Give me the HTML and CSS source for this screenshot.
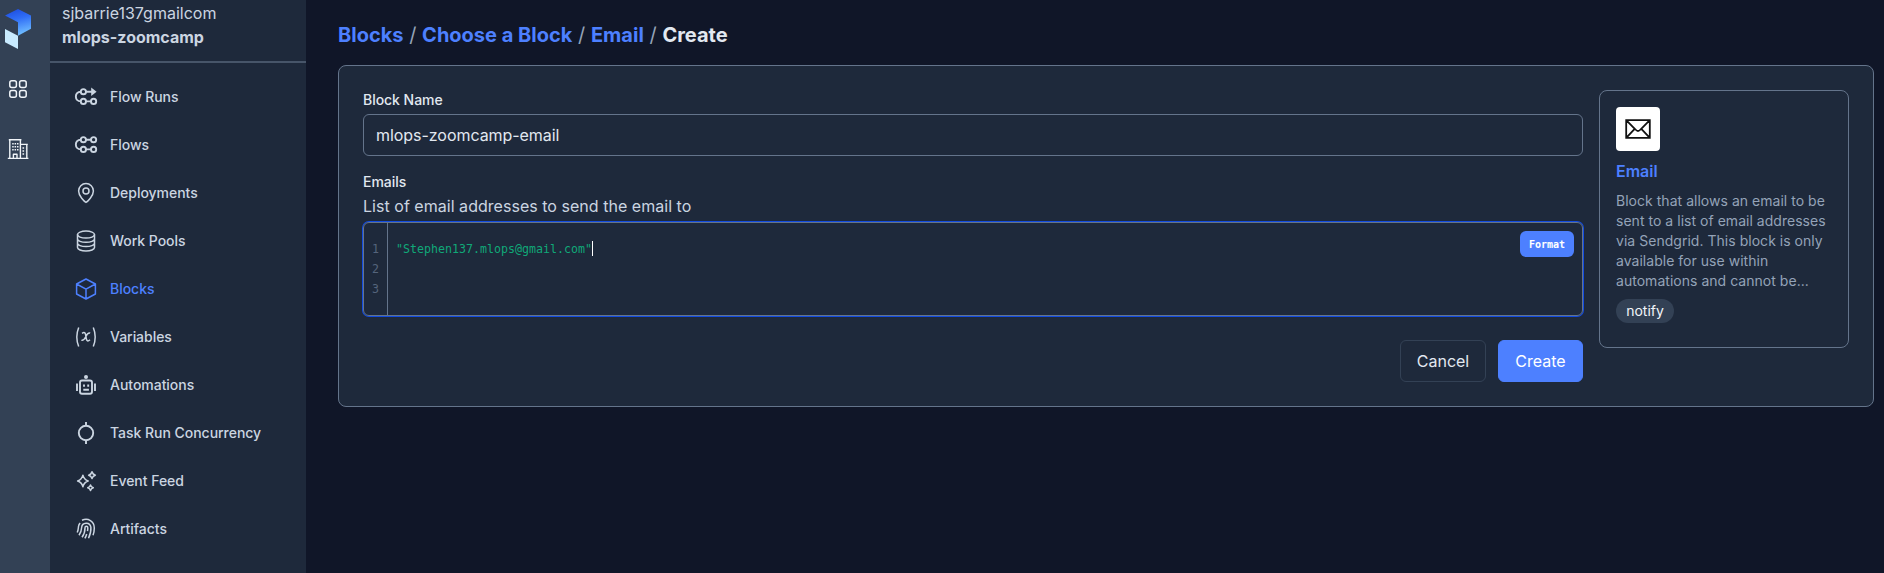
FILE: index.html
```html
<!DOCTYPE html>
<html lang="en">
<head>
<meta charset="utf-8">
<title>Create Block</title>
<link rel="stylesheet" href="styles.css">
</head>
<body>
<div class="app">
  <nav class="rail">
    <svg class="logo" width="26" height="40" viewBox="0 0 26 40">
      <defs><linearGradient id="lg" x1="0" y1="0" x2="0.25" y2="1"><stop offset="0" stop-color="#1b48dc"/><stop offset=".45" stop-color="#2f6df6"/><stop offset="1" stop-color="#6bb8ff"/></linearGradient></defs>
      <path d="M0 6.5 13 0l13 6.5v13.3L13 26.8V13.2z" fill="url(#lg)"/>
      <path d="M0 20l13 6.8V40L0 33.2z" fill="#c9ebff"/>
    </svg>
    <svg class="rail-icon" width="24" height="24" viewBox="0 0 24 24"><g class="ln"><rect x="3.8" y="3.8" width="6.6" height="6.6" rx="2"/><rect x="13.6" y="3.8" width="6.6" height="6.6" rx="2"/><rect x="3.8" y="13.6" width="6.6" height="6.6" rx="2"/><rect x="13.6" y="13.6" width="6.6" height="6.6" rx="2"/></g></svg>
    <svg class="rail-icon" width="24" height="24" viewBox="0 0 24 24"><g class="ln ln-thin"><path d="M1.8 21.4h20.6M2.8 2.7h12.6M3.8 2.7v18.7M14.4 2.7v18.7M14.4 7.4h7.4M20.8 7.4v14M7.4 21.4v-4.2h3.6v4.2"/></g><path class="dots" d="M6.2 6.7h6.4M6.2 9.7h6.4M6.2 12.7h6.4M16.5 11h2.6M16.5 14h2.6M16.5 17h2.6"/></svg>
  </nav>
  <aside class="sidebar">
    <header class="account"><span>sjbarrie137gmailcom</span><strong>mlops-zoomcamp</strong></header>
    <ul class="menu">
      <li><svg width="24" height="24" viewBox="0 0 24 24"><g class="ln ln-bold"><circle cx="9.4" cy="6.7" r="2.6"/><circle cx="9.4" cy="16.4" r="2.6"/><circle cx="19.6" cy="16.4" r="2.6"/><path d="M12 6.7h6M12 16.4h5M6.8 6.7C.2 6.7.2 16.4 6.8 16.4"/></g><path class="solid" d="M17.2 2.5l5.4 4.2-5.4 4.2z"/></svg>Flow Runs</li>
      <li><svg width="24" height="24" viewBox="0 0 24 24"><g class="ln ln-bold"><circle cx="9.4" cy="6.7" r="2.6"/><circle cx="19.6" cy="6.7" r="2.6"/><circle cx="9.4" cy="16.4" r="2.6"/><circle cx="19.6" cy="16.4" r="2.6"/><path d="M12 6.7h5M12 16.4h5M6.8 6.7C.2 6.7.2 16.4 6.8 16.4"/></g></svg>Flows</li>
      <li><svg width="24" height="24" viewBox="0 0 24 24"><g class="ln"><path d="M12 21.4c-1.6-.8-7.4-6.4-7.4-11.4a7.4 7.4 0 0 1 14.8 0c0 5-5.8 10.600-7.400 11.400z"/><circle cx="12" cy="10" r="3"/></g></svg>Deployments</li>
      <li><svg width="24" height="24" viewBox="0 0 24 24"><g class="ln"><ellipse cx="12" cy="5.600" rx="8.500" ry="3.500"/><path d="M3.500 5.600v13c0 1.800 3.800 3.400 8.500 3.400s8.500-1.600 8.500-3.400v-13M3.500 10c0 1.800 3.800 3.300 8.500 3.300s8.500-1.500 8.500-3.300M3.500 14.300c0 1.800 3.800 3.300 8.500 3.300s8.500-1.500 8.500-3.300"/></g></svg>Work Pools</li>
      <li class="active"><svg width="24" height="24" viewBox="0 0 24 24"><g class="ln"><path d="M12 2l9.400 5v10L12 22l-9.400-5V7zM2.600 7l9.400 5.200L21.400 7M12 12.200V22"/></g></svg>Blocks</li>
      <li><svg width="24" height="24" viewBox="0 0 24 24"><g class="ln"><path d="M4.700 2.500c-2.400 6-2.400 13 0 19M19.300 2.500c2.400 6 2.400 13 0 19M8 8.300c3-1.800 3.600 0 4 3.500s1.200 5.600 4 3M16.200 8c-2.600-.8-3.600 1.800-4.600 4-1 2-2 3.900-4.200 3.200"/></g></svg>Variables</li>
      <li><svg width="24" height="24" viewBox="0 0 24 24"><g class="ln ln-bold"><rect x="6" y="7.500" width="12" height="13.300" rx="2"/><path d="M3 10.500v7.500M21 10.500v7.500M9.300 16.800h5.600M10 11.500v2.200M14.200 11.500v2.200"/></g><circle class="solid" cx="12" cy="4.100" r="2"/></svg>Automations</li>
      <li><svg width="24" height="24" viewBox="0 0 24 24"><g class="ln ln-bold"><circle cx="12" cy="12" r="7.200"/><path d="M12 1v4M12 19v4"/></g></svg>Task Run Concurrency</li>
      <li><svg width="24" height="24" viewBox="0 0 24 24"><g class="ln"><path d="M8.900 6.200c.8 3.500 2 4.800 5.300 5.800-3.300 1-4.500 2.300-5.300 5.800-.8-3.500-2-4.800-5.300-5.800 3.300-1 4.500-2.300 5.300-5.800zM18 2.800c.5 2 1.300 2.900 3.400 3.400-2.100.5-2.900 1.400-3.400 3.400-.5-2-1.300-2.900-3.400-3.400 2.100-.5 2.900-1.400 3.400-3.400zM16.500 16c.4 1.600 1.100 2.300 2.800 2.800-1.700.5-2.400 1.200-2.800 2.800-.4-1.600-1.100-2.300-2.800-2.800 1.700-.5 2.400-1.200 2.800-2.800z"/></g></svg>Event Feed</li>
      <li><svg width="24" height="24" viewBox="0 0 24 24"><g class="ln"><path d="M8 3.300c6-2.700 12.300 1 12.300 7.700 0 2.700-.4 5-1.300 7.200M3.200 15.500c1.200-2.200 1-4 1.300-6 .2-1.300.8-2.500 1.600-3.500M5 18.300c2-2.600 2.500-5 2.700-8 .3-5 8.300-6 9.200 0 .3 3.700-.8 7.500-2.400 11M8 20.300c2.300-3 3-6.300 3-9.500 0-2.100 2.800-2.100 2.800 0 0 1.200-.1 2.300-.3 3.400M12.700 17c-.4 1.500-1 3-1.800 4.400"/></g></svg>Artifacts</li>
    </ul>
  </aside>
  <main class="content">
    <h1 class="crumbs"><a>Blocks</a><i>/</i><a>Choose a Block</a><i>/</i><a>Email</a><i>/</i><span>Create</span></h1>
    <section class="card">
      <form class="form">
        <label class="label">Block Name</label>
        <div class="input">mlops-zoomcamp-email</div>
        <label class="label label-next">Emails</label>
        <p class="help">List of email addresses to send the email to</p>
        <div class="editor">
          <div class="gutter"><span>1</span><span>2</span><span>3</span></div>
          <div class="code"><span class="str">"Stephen137.mlops@gmail.com"</span><span class="caret"></span></div>
          <div class="format">Format</div>
        </div>
        <div class="actions"><div class="btn">Cancel</div><div class="btn primary">Create</div></div>
      </form>
      <aside class="block">
        <div class="block-logo"><svg width="26" height="20" viewBox="0 0 26 20"><path d="M1.200 1.200h23.600v17.600H1.200zM1.200 1.200L10.500 10.500Q13 13.500 15.500 10.500L24.800 1.200M1.200 18.800l8.500-9M24.800 18.800l-8.500-9" fill="none" stroke="#111" stroke-width="1.800"/></svg></div>
        <h2 class="block-name">Email</h2>
        <p class="block-desc">Block that allows an email to be<br>sent to a list of email addresses<br>via Sendgrid. This block is only<br>available for use within<br>automations and cannot be...</p>
        <span class="tag">notify</span>
      </aside>
    </section>
  </main>
</div>
</body>
</html>
```
FILE: styles.css
```css
* { box-sizing: border-box; margin: 0; padding: 0; }
body { background: #0f172a; color: #e2e8f0; font: 400 16px/24px Inter, sans-serif; }
.app { display: flex; height: 573px; overflow: hidden; background: #101628; }
.rail { width: 50px; background: #334155; color: #f1f5f9; padding: 9px 0 0 5px; display: flex; flex-direction: column; flex: none; }
.logo { display: block; margin-bottom: 28px; }
.rail-icon { display: block; margin: 0 0 36px 1px; }
.sidebar { width: 256px; background: #1e293b; color: #cbd5e1; flex: none; }
.account { height: 63px; padding: 1px 12px 0; display: flex; flex-direction: column; border-bottom: 2px solid #475569; }
.account strong { font-weight: 700; }
.menu { list-style: none; padding-top: 10px; font-size: 14px; font-weight: 500; letter-spacing: -.03px; }
.menu li { height: 48px; padding-left: 24px; display: flex; align-items: center; gap: 12px; }
.menu .active { color: #4d80ff; }
.ln { fill: none; stroke: currentColor; stroke-width: 1.5; stroke-linejoin: round; }
.ln-thin { stroke-width: 1.4; }
.ln-bold { stroke-width: 1.9; }
.solid { fill: currentColor; }
.dots { stroke: currentColor; stroke-width: 1.5; stroke-dasharray: 1.5 .9; }
.content { flex: 1; padding: 21px 10px 0 32px; }
.crumbs { display: flex; font-size: 20px; line-height: 28px; font-weight: 700; margin-bottom: 16px; }
.crumbs a { color: #4d80ff; }
.crumbs i { font-style: normal; font-weight: 400; color: #94a3b8; width: 18.6px; text-align: center; }
.card { height: 342px; border: 1px solid #64748b; border-radius: 8px; background: #1e293b; padding: 24px; display: flex; gap: 16px; align-items: flex-start; }
.form { flex: 1; }
.label { display: block; font-size: 14px; line-height: 20px; font-weight: 500; letter-spacing: -.04px; }
.input { margin-top: 4px; height: 42px; border: 1px solid #64748b; border-radius: 6px; padding: 0 12px; line-height: 40px; letter-spacing: -.05px; }
.label-next { margin-top: 16px; }
.help { color: #cbd5e1; margin: 2px 0 4px; letter-spacing: .03px; }
.editor { position: relative; height: 94px; border: 1px solid #64748b; border-radius: 6px; box-shadow: 0 0 0 1px #124be0; display: flex; font: 11.63px/20px "DejaVu Sans Mono", monospace; }
.gutter { width: 24px; border-right: 1px solid #64748b; padding: 16px 8px 0 0; display: flex; flex-direction: column; align-items: flex-end; color: #55647c; }
.code { display: flex; padding: 16px 0 0 8px; color: #10a878; }
.caret { width: 1px; height: 15px; margin-top: 2px; background: #fff; }
.format { position: absolute; top: 8px; right: 8px; width: 54px; height: 26px; border-radius: 6px; background: #4d80ff; color: #fff; font: 700 10px/27px "DejaVu Sans Mono", monospace; text-align: center; }
.actions { display: flex; justify-content: flex-end; gap: 12px; margin-top: 24px; }
.btn { width: 86px; height: 42px; border: 1px solid #334155; border-radius: 6px; text-align: center; line-height: 40px; }
.primary { width: 85px; background: #4d80ff; border-color: #4d80ff; color: #fff; }
.block { width: 250px; height: 258px; border: 1px solid #64748b; border-radius: 8px; padding: 16px; }
.block-logo { width: 44px; height: 44px; border-radius: 4px; background: #fff; display: flex; align-items: center; justify-content: center; }
.block-name { font-size: 16px; line-height: 24px; font-weight: 600; color: #4d80ff; margin-top: 8px; }
.block-desc { font-size: 14px; line-height: 20px; color: #94a3b8; margin: 8px 0; white-space: nowrap; letter-spacing: .03px; }
.tag { display: block; width: 58px; height: 24px; border-radius: 12px; background: #334155; font-size: 14px; line-height: 24px; text-align: center; color: #f1f5f9; }
```
